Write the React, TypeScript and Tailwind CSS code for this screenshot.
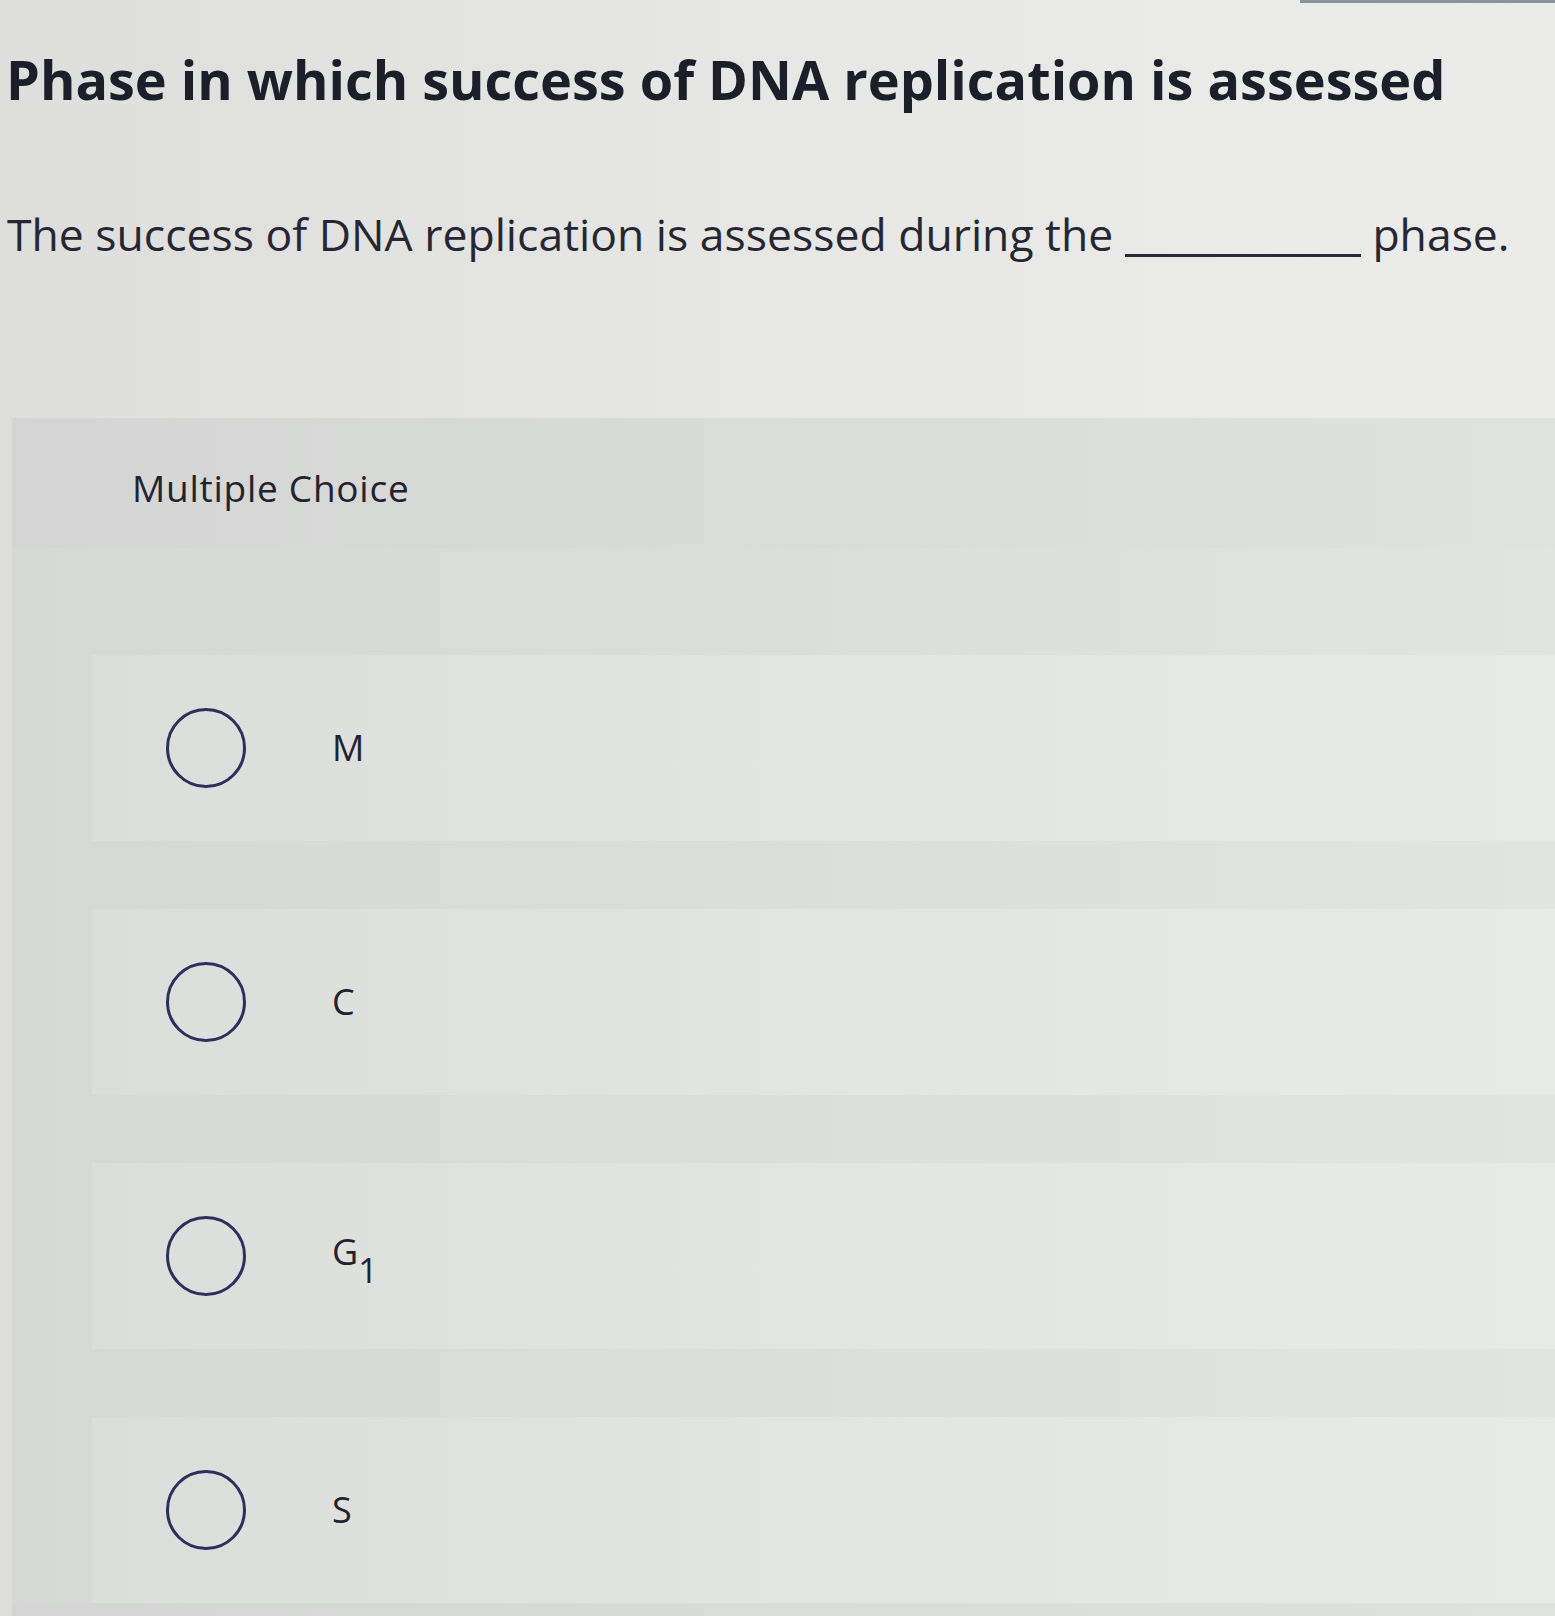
import { FC } from 'react'

interface IChoice {
  label: string
  sub?: string
}

const choices: IChoice[] = [
  { label: 'M' },
  { label: 'C' },
  { label: 'G', sub: '1' },
  { label: 'S' },
]

const ChoiceRow: FC<{ choice: IChoice }> = ({ choice }) => (
  <div className="flex items-center h-[186px] pl-[74px] bg-linear-to-r from-[#dcdedc] via-[#e3e5e3] to-[#e8eae8]">
    <span className="block w-[80px] h-[80px] rounded-full border-[3px] border-[#2e2f5a] shrink-0" />
    <span className="ml-[86px] text-[36px] leading-none text-[#22232e]">
      {choice.label}
      {choice.sub && (
        <sub className="align-[-9px] text-[34px] leading-none">{choice.sub}</sub>
      )}
    </span>
  </div>
)

export default function App() {
  return (
    <div className="min-h-[1616px] w-full flex flex-col bg-linear-to-r from-[#dedfdd] via-[#e7e8e6] to-[#ecedeb] font-['Open_Sans',sans-serif]">
      <div className="flex justify-end h-[3px]">
        <div className="w-[255px] bg-[#8d929b]" />
      </div>

      <h1 className="mt-[49px] pl-[6px] text-[54px] leading-none font-bold text-[#1d1e29]">
        Phase in which success of DNA replication is assessed
      </h1>

      <p className="mt-[106px] pl-[7px] text-[44.5px] leading-none text-[#262733]">
        The success of DNA replication is assessed during the{' '}
        <span className="inline-block w-[236px] border-b-[3px] border-[#2a2b36] align-[-6px]" />{' '}
        phase.
      </p>

      <div className="mt-[161px] ml-[12px] flex-1 flex flex-col bg-linear-to-r from-[#d4d5d4] via-[#dadcda] to-[#e0e2e0]">
        <div className="h-[130px] pt-[51px] pl-[120px]">
          <h2 className="text-[37px] leading-none tracking-[0.02em] text-[#22232e]">Multiple Choice</h2>
        </div>
        <div className="flex flex-col gap-[68px] pt-[107px] pl-[80px] bg-linear-to-r from-[#d6d8d6] via-[#dcdedc] to-[#e2e4e2]">
          {choices.map((choice, index) => (
            <ChoiceRow key={index} choice={choice} />
          ))}
        </div>
      </div>
    </div>
  )
}
